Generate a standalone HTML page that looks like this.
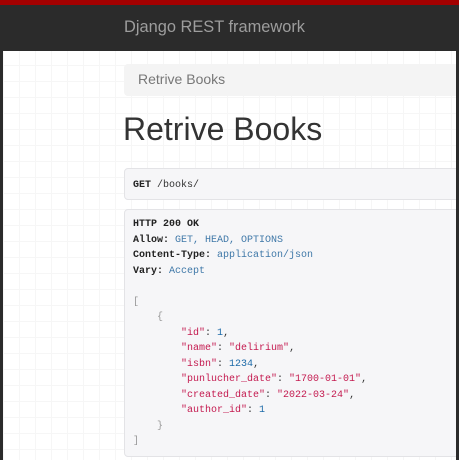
<!DOCTYPE html>
<html><head><style>
html,body{margin:0;padding:0;width:459px;height:460px;overflow:hidden;background:#2b2b2b;}
#wrap{position:absolute;left:3px;top:0;width:453px;height:460px;background-color:#fff;overflow:hidden;
background-image:linear-gradient(#f6f6f6 1px,transparent 1px),linear-gradient(90deg,#f6f6f6 1px,transparent 1px);background-size:16px 16px;background-position:0 1px;}
#rb{position:absolute;left:456px;top:0;width:3px;height:460px;background:#2b2b2b;z-index:5}
#red{position:absolute;left:0;top:0;width:459px;height:5px;background:#a30000;z-index:6}
#nav{position:absolute;left:0;top:5px;width:459px;height:46px;background:#2b2b2b;}
#nav span{position:absolute;left:124px;top:13px;font:16.4px "Liberation Sans",sans-serif;color:#9d9d9d;}
.bc{position:absolute;left:124px;top:64px;width:340px;height:32px;background:#f4f4f4;border-radius:4px;font:14px "Liberation Sans",sans-serif;color:#777;}
.bc span{position:absolute;left:14px;top:7px;}
h1{position:absolute;left:123px;top:111px;margin:0;font:400 32px "Liberation Sans",sans-serif;color:#333;}
.box{position:absolute;left:124px;width:340px;background:#f6f6f8;border:1px solid #e3e3e6;border-radius:4px;font:10px "Liberation Mono",monospace;color:#333;}
.get{top:168px;height:30px;}
.get div{position:absolute;left:8px;top:11px;}
.resp{top:209px;height:246px;}
pre{margin:0;position:absolute;left:8px;top:7px;font:10px/15.5px "Liberation Mono",monospace;}
b{font-weight:bold;color:#222}
.v{color:#3f78a8}.k{color:#c41a4f}.s{color:#c41a4f}.n{color:#1c6aa8}.p{color:#999}
</style></head><body>
<div id="wrap"></div>
<div id="rb"></div>
<div id="red"></div>
<div id="nav"><span>Django REST framework</span></div>
<div class="bc"><span>Retrive Books</span></div>
<h1>Retrive Books</h1>
<div class="box get"><div><b>GET</b> /books/</div></div>
<div class="box resp"><pre><b>HTTP 200 OK</b>
<b>Allow:</b> <span class="v">GET, HEAD, OPTIONS</span>
<b>Content-Type:</b> <span class="v">application/json</span>
<b>Vary:</b> <span class="v">Accept</span>

<span class="p">[</span>
    <span class="p">{</span>
        <span class="k">"id"</span>: <span class="n">1</span>,
        <span class="k">"name"</span>: <span class="s">"delirium"</span>,
        <span class="k">"isbn"</span>: <span class="n">1234</span>,
        <span class="k">"punlucher_date"</span>: <span class="s">"1700-01-01"</span>,
        <span class="k">"created_date"</span>: <span class="s">"2022-03-24"</span>,
        <span class="k">"author_id"</span>: <span class="n">1</span>
    <span class="p">}</span>
<span class="p">]</span></pre></div>
</body></html>
